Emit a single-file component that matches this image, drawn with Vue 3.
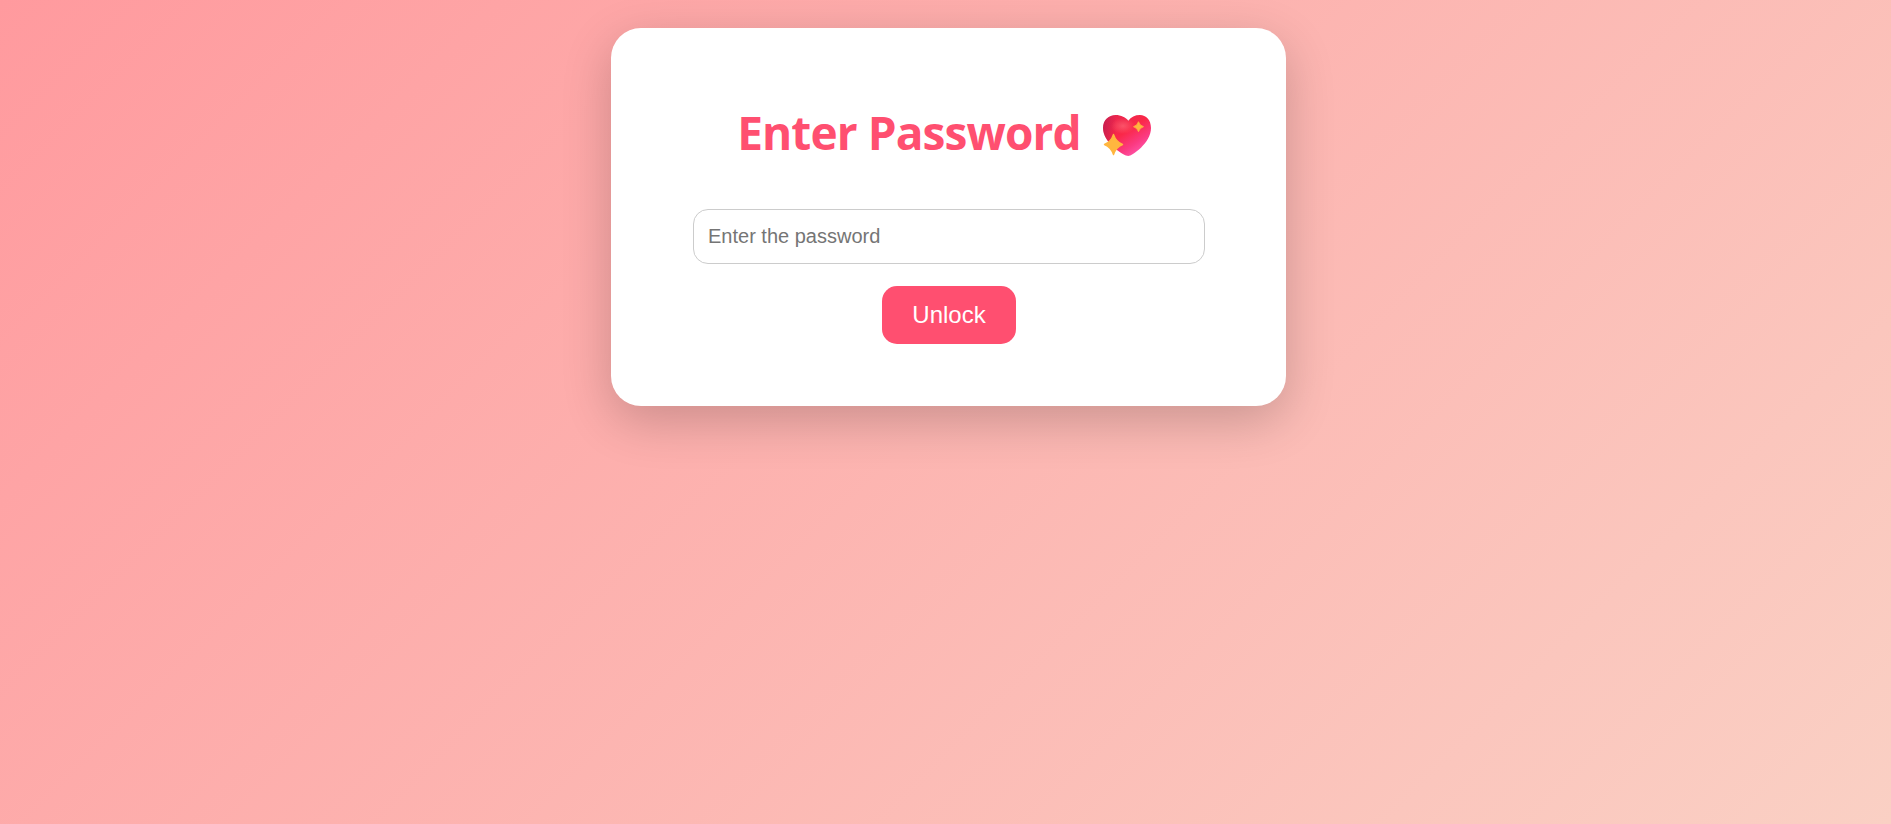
<template>
  <div class="page">
    <div class="card">
      <h1 class="title">
        Enter Password
        <svg class="heart" viewBox="-1 -1 50 43" width="50" height="43" role="img" aria-label="sparkling heart">
          <defs>
            <linearGradient id="heartFill" x1="0.1" y1="0.05" x2="0.8" y2="0.95">
              <stop offset="0" stop-color="#e8264f" />
              <stop offset="0.45" stop-color="#fa2848" />
              <stop offset="0.75" stop-color="#fb3a82" />
              <stop offset="1" stop-color="#ff5ab0" />
            </linearGradient>
            <linearGradient id="heartEdge" x1="0" y1="0" x2="1" y2="0">
              <stop offset="0" stop-color="#a8164f" stop-opacity="0.5" />
              <stop offset="0.28" stop-color="#a8164f" stop-opacity="0" />
            </linearGradient>
            <radialGradient id="heartShine" cx="0.5" cy="0.5" r="0.5">
              <stop offset="0" stop-color="#ff6f7c" stop-opacity="0.6" />
              <stop offset="1" stop-color="#ff6f7c" stop-opacity="0" />
            </radialGradient>
          </defs>
          <path
            d="M25.300 41C21 41 0 28 0 13 0 5 6 0 12.500 0c5.500 0 10.500 2.500 12.800 5.700C28 2 32 0 37 0c6 0 11 5 11 13 0 15-19 28-22.700 28Z"
            fill="url(#heartFill)"
          />
          <path
            d="M25.300 41C21 41 0 28 0 13 0 5 6 0 12.500 0c5.500 0 10.500 2.500 12.800 5.700C28 2 32 0 37 0c6 0 11 5 11 13 0 15-19 28-22.700 28Z"
            fill="url(#heartEdge)"
          />
          <ellipse cx="20" cy="11" rx="12" ry="8" fill="url(#heartShine)" />
          <path
            d="M10.500 19.500Q13 27 19.500 29.500 13 32 10.500 39.500 8 32 1.500 29.500 8 27 10.500 19.500Z"
            fill="#ffb63f"
            stroke="#ffb63f"
            stroke-width="1.400"
            stroke-linejoin="round"
          />
          <path
            d="M35.500 6.700Q36.700 10.500 40.500 11.700 36.700 12.900 35.500 16.700 34.300 12.900 30.500 11.700 34.300 10.500 35.500 6.700Z"
            fill="#ffb63f"
            stroke="#ffb63f"
            stroke-width="0.800"
            stroke-linejoin="round"
          />
        </svg>
      </h1>
      <input class="password" type="password" placeholder="Enter the password" />
      <button class="unlock" type="button">Unlock</button>
    </div>
  </div>
</template>

<script setup>
</script>

<style>
html,
body {
  margin: 0;
  height: 100%;
}
</style>

<style scoped>
.page {
  box-sizing: border-box;
  min-height: 100vh;
  padding: 28px 0 0 6px;
  display: flex;
  justify-content: center;
  align-items: flex-start;
  background: linear-gradient(135deg, #ff9a9e, #fad0c4);
}

.card {
  box-sizing: border-box;
  width: 675px;
  height: 378px;
  padding: 71px 81px 0 82px;
  display: flex;
  flex-direction: column;
  align-items: center;
  background: #fff;
  border-radius: 30px;
  box-shadow: 0 15px 50px rgba(0, 0, 0, 0.2);
}

.title {
  margin: 0 9px 44px 0;
  height: 66px;
  font-family: "Open Sans", "Noto Sans", sans-serif;
  font-size: 46px;
  letter-spacing: -0.9px;
  line-height: 66px;
  font-weight: 700;
  color: #ff4f70;
  white-space: nowrap;
}

.heart {
  margin-left: 10px;
  vertical-align: -7px;
}

.password {
  box-sizing: border-box;
  width: 512px;
  height: 55px;
  padding: 15px 14px;
  border: 1px solid #ccc;
  border-radius: 15px;
  font-family: "Liberation Sans", Arial, sans-serif;
  font-size: 20px;
  outline: none;
}

.password::placeholder {
  color: #757575;
}

.unlock {
  margin-top: 22px;
  padding: 15px 30px;
  border: none;
  border-radius: 15px;
  background: #ff4f70;
  color: #fff;
  font-family: "Liberation Sans", Arial, sans-serif;
  font-size: 24px;
  cursor: pointer;
}
</style>
